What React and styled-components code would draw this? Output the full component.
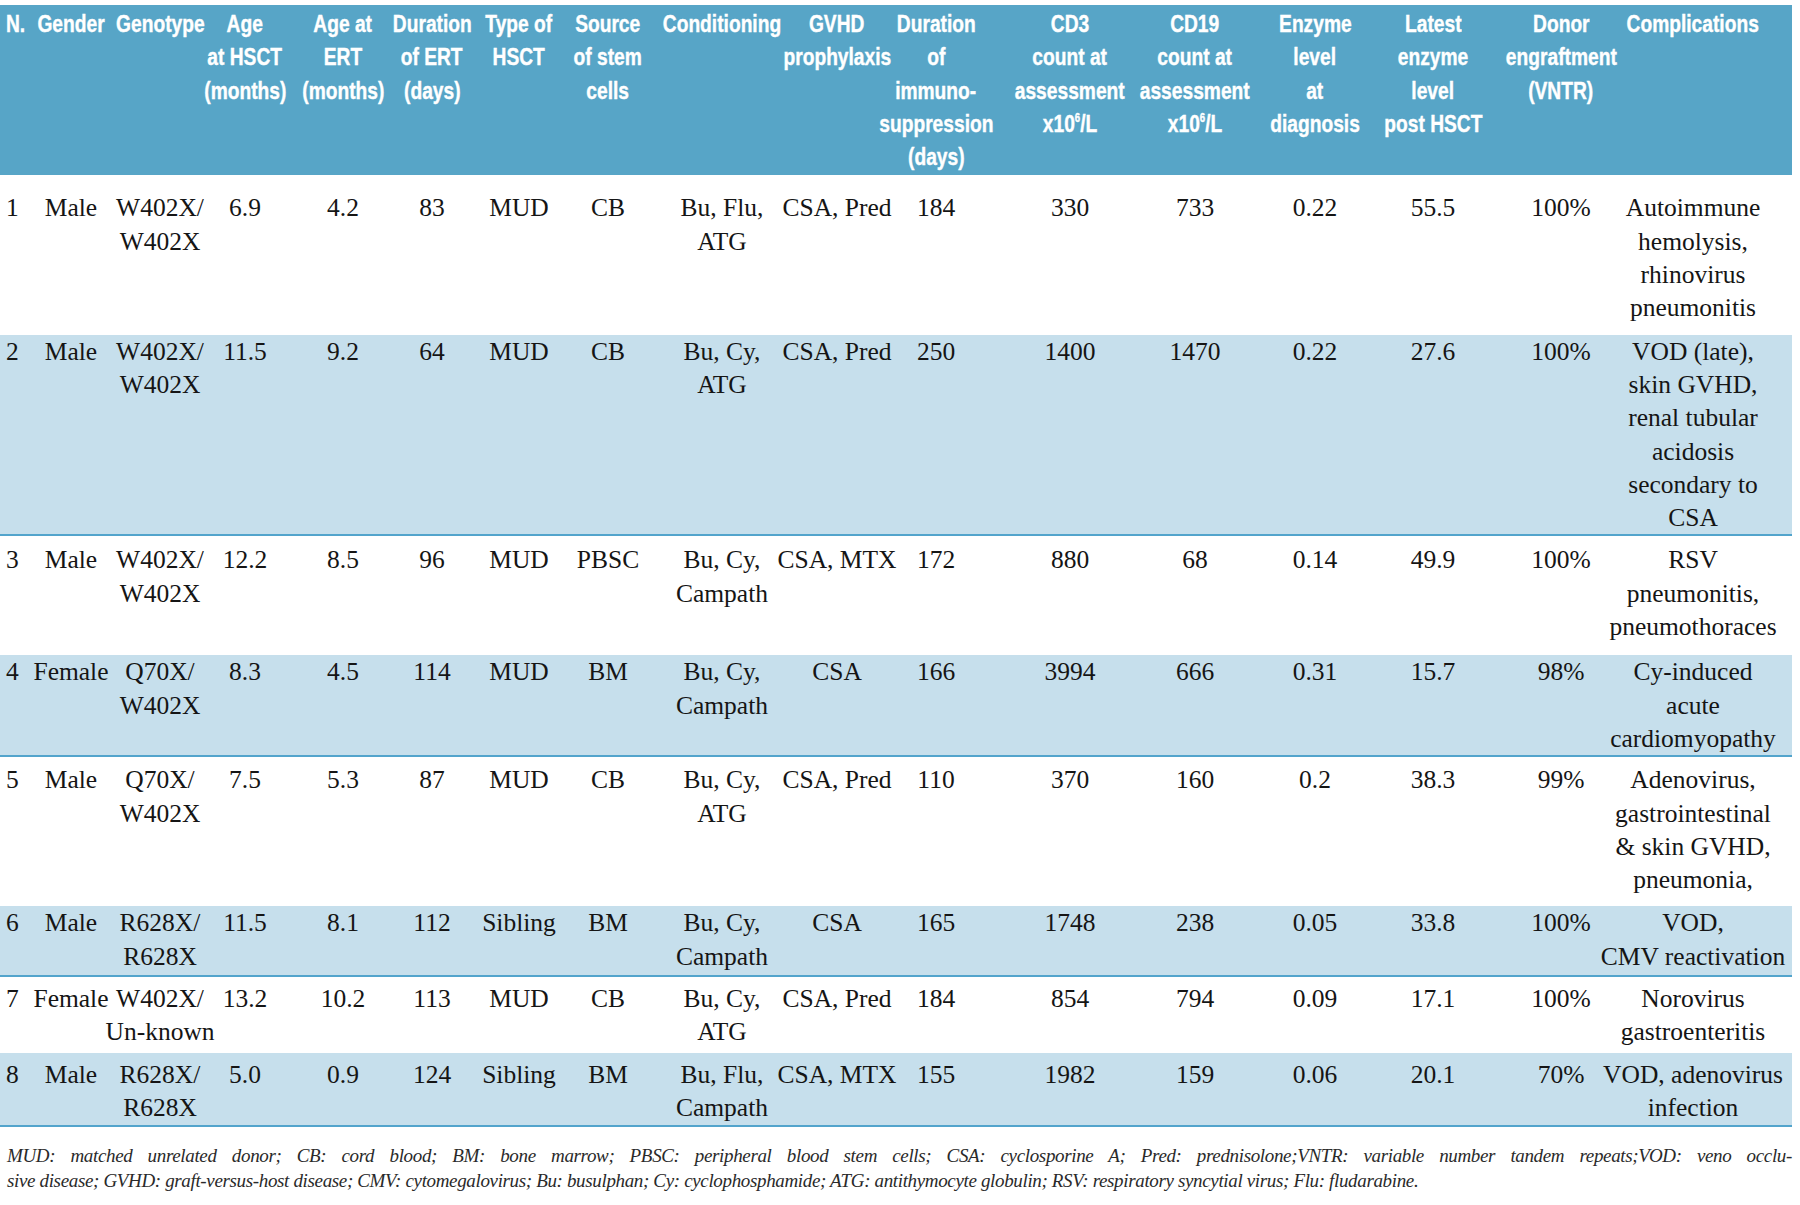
import React from 'react'
import styled, { createGlobalStyle } from 'styled-components'

const GlobalStyle = createGlobalStyle`
    body {
        margin: 0;
        background: #fff;
    }
`

const columns = '30px 82px 96px 74px 122px 56px 118px 60px 168px 62px 136px 132px 118px 122px 114px 142px 122px'

const headers = [
    ['N.'],
    ['Gender'],
    ['Genotype'],
    ['Age', 'at HSCT', '(months)'],
    ['Age at', 'ERT', '(months)'],
    ['Duration', 'of ERT', '(days)'],
    ['Type of', 'HSCT'],
    ['Source', 'of stem', 'cells'],
    ['Conditioning'],
    ['GVHD', 'prophylaxis'],
    ['Duration', 'of', 'immuno-', 'suppression', '(days)'],
    ['CD3', 'count at', 'assessment', <>x10<sup>6</sup>/L</>],
    ['CD19', 'count at', 'assessment', <>x10<sup>6</sup>/L</>],
    ['Enzyme', 'level', 'at', 'diagnosis'],
    ['Latest', 'enzyme', 'level', 'post HSCT'],
    ['Donor', 'engraftment', '(VNTR)'],
    ['Complications'],
]

// padding (top / bottom) of each row, as typeset in the original
const rowPads = ['16px 0 10px', '0 0 0', '7px 0 12px', '0 0 0', '6px 0 10px', '0 0 2px', '5px 0 4px', '5px 0 1px']

const rows = [
    ['1', 'Male', ['W402X/', 'W402X'], '6.9', '4.2', '83', 'MUD', 'CB', ['Bu, Flu,', 'ATG'], 'CSA, Pred', '184', '330', '733', '0.22', '55.5', '100%', ['Autoimmune', 'hemolysis,', 'rhinovirus', 'pneumonitis']],
    ['2', 'Male', ['W402X/', 'W402X'], '11.5', '9.2', '64', 'MUD', 'CB', ['Bu, Cy,', 'ATG'], 'CSA, Pred', '250', '1400', '1470', '0.22', '27.6', '100%', ['VOD (late),', 'skin GVHD,', 'renal tubular', 'acidosis', 'secondary to', 'CSA']],
    ['3', 'Male', ['W402X/', 'W402X'], '12.2', '8.5', '96', 'MUD', 'PBSC', ['Bu, Cy,', 'Campath'], 'CSA, MTX', '172', '880', '68', '0.14', '49.9', '100%', ['RSV', 'pneumonitis,', 'pneumothoraces']],
    ['4', 'Female', ['Q70X/', 'W402X'], '8.3', '4.5', '114', 'MUD', 'BM', ['Bu, Cy,', 'Campath'], 'CSA', '166', '3994', '666', '0.31', '15.7', '98%', ['Cy-induced', 'acute', 'cardiomyopathy']],
    ['5', 'Male', ['Q70X/', 'W402X'], '7.5', '5.3', '87', 'MUD', 'CB', ['Bu, Cy,', 'ATG'], 'CSA, Pred', '110', '370', '160', '0.2', '38.3', '99%', ['Adenovirus,', 'gastrointestinal', '& skin GVHD,', 'pneumonia,']],
    ['6', 'Male', ['R628X/', 'R628X'], '11.5', '8.1', '112', 'Sibling', 'BM', ['Bu, Cy,', 'Campath'], 'CSA', '165', '1748', '238', '0.05', '33.8', '100%', ['VOD,', 'CMV reactivation']],
    ['7', 'Female', ['W402X/', 'Un-known'], '13.2', '10.2', '113', 'MUD', 'CB', ['Bu, Cy,', 'ATG'], 'CSA, Pred', '184', '854', '794', '0.09', '17.1', '100%', ['Norovirus', 'gastroenteritis']],
    ['8', 'Male', ['R628X/', 'R628X'], '5.0', '0.9', '124', 'Sibling', 'BM', ['Bu, Flu,', 'Campath'], 'CSA, MTX', '155', '1982', '159', '0.06', '20.1', '70%', ['VOD, adenovirus', 'infection']],
]

const App = () => {
    return (
        <>
            <GlobalStyle />
            <Page>
                <Table>
                    <HeadRow>
                        {headers.map((lines, i) => (
                            <HeadCell key={i} $left={i === 0}>
                                {lines.map((line, j) => <HeadLine key={j} $left={i === 0}>{line}</HeadLine>)}
                            </HeadCell>
                        ))}
                    </HeadRow>
                    {rows.map((row, r) => (
                        <Row key={r} $shaded={r % 2 === 1} $pad={rowPads[r]}>
                            {row.map((value, i) => (
                                <Cell key={i} $left={i === 0}>
                                    {[].concat(value).map((line, j) => <Line key={j}>{line}</Line>)}
                                </Cell>
                            ))}
                        </Row>
                    ))}
                </Table>
                <Notes>
                    <NoteLine $full>
                        MUD: matched unrelated donor; CB: cord blood; BM: bone marrow; PBSC: peripheral blood stem cells; CSA: cyclosporine A; Pred: prednisolone;VNTR: variable number tandem repeats;VOD: veno occlu-
                    </NoteLine>
                    <NoteLine>
                        sive disease; GVHD: graft-versus-host disease; CMV: cytomegalovirus; Bu: busulphan; Cy: cyclophosphamide; ATG: antithymocyte globulin; RSV: respiratory syncytial virus; Flu: fludarabine.
                    </NoteLine>
                </Notes>
            </Page>
        </>
    )
}

const Page = styled.div`
    padding-top: 5px;
    width: 1800px;
    overflow: hidden;
`

const Table = styled.div`
    width: 1792px;
    display: flex;
    flex-direction: column;
`

const HeadRow = styled.div`
    display: grid;
    grid-template-columns: ${columns};
    padding: 2px 38px 2px 0;
    background: #57a5c7;
    color: #fff;
    font-family: "Liberation Sans", Arial, sans-serif;
    font-weight: 700;
    font-size: 24px;
    line-height: 33.3px;
    -webkit-text-stroke: 0.4px #fff;

    sup {
        font-size: 12px;
        line-height: 0;
        vertical-align: 10px;
    }
`

const HeadCell = styled.div`
    display: flex;
    flex-direction: column;
    align-items: ${props => props.$left ? 'flex-start' : 'center'};
    padding-left: ${props => props.$left ? '6px' : '0'};
`

// the original heading face is a condensed bold sans
const HeadLine = styled.span`
    white-space: nowrap;
    transform: scaleX(0.8);
    transform-origin: ${props => props.$left ? 'left center' : 'center'};
`

const Row = styled.div`
    display: grid;
    grid-template-columns: ${columns};
    padding: ${props => props.$pad};
    padding-right: 38px;
    background: ${props => props.$shaded ? '#c6dfec' : '#fff'};
    border-bottom: ${props => props.$shaded ? '2px solid #52a4cc' : 'none'};
    color: #151515;
    font-family: "Liberation Serif", serif;
    font-size: 25.5px;
    line-height: 33.3px;
`

const Cell = styled.div`
    display: flex;
    flex-direction: column;
    align-items: ${props => props.$left ? 'flex-start' : 'center'};
    padding-left: ${props => props.$left ? '6px' : '0'};
`

const Line = styled.span`
    white-space: nowrap;
`

const Notes = styled.div`
    padding: 16px 8px 0 7px;
    width: 1785px;
    font-family: "Liberation Serif", serif;
    font-style: italic;
    font-size: 19px;
    line-height: 25px;
    letter-spacing: -0.35px;
    color: #2a2a2a;
`

const NoteLine = styled.div`
    white-space: nowrap;
    text-align: ${props => props.$full ? 'justify' : 'left'};
    text-align-last: ${props => props.$full ? 'justify' : 'auto'};
`

export default App
